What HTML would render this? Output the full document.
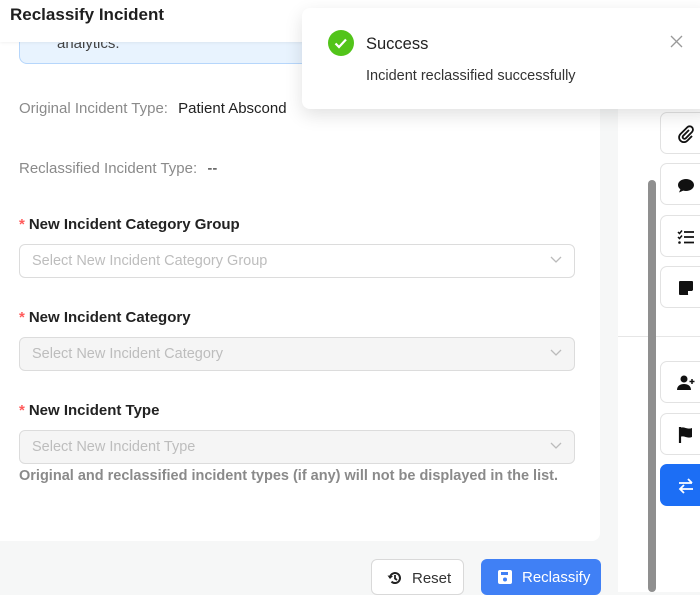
<!DOCTYPE html>
<html><head><style>
*{box-sizing:border-box;margin:0;padding:0}
body{width:700px;height:592px;overflow:hidden;background:#f6f7f7;font-family:"Liberation Sans",sans-serif;position:relative;font-size:14px}
.hdr{position:absolute;left:0;top:0;width:700px;height:42px;background:#fff;box-shadow:0 1px 3px rgba(0,0,0,.06)}
.hdr h1{position:absolute;left:10px;top:5px;font-size:17px;font-weight:bold;color:#1f1f1f}
.card{position:absolute;left:-10px;top:42px;width:610px;height:499px;background:#fff;border-radius:0 0 8px 8px}
.info{position:absolute;left:19px;top:30px;width:600px;height:34px;background:#e8f3fe;border:1px solid #b6d6fb;border-radius:0 0 8px 8px;border-top:none}
.info span{position:absolute;left:37px;top:5px;color:#444;font-size:15px}
.t{position:absolute;color:#8a8a8a;font-size:15px}
.t b{font-weight:normal;color:#222;margin-left:6px}
.lab{position:absolute;left:19px;font-size:15px;font-weight:bold;color:#222}
.lab i{color:#ff5a5a;font-style:normal;margin-right:4px}
.sel{position:absolute;left:19px;width:556px;height:34px;border:1px solid #dcdcdc;border-radius:6px;color:#bdbdbd;padding:8px 12px;font-size:14.5px}
.sel.d{background:#f5f5f5}
.sel svg{position:absolute;right:12px;top:11px}
.note{position:absolute;left:19px;top:468px;color:#8a8a8a;font-size:14.5px;font-weight:bold}
.btn{position:absolute;top:559px;height:36px;border-radius:6px;font-size:15px}
.btn span{position:absolute;top:10px}
.reset{left:371px;width:93px;border:1px solid #d9d9d9;background:#fff;color:#333}
.recl{left:481px;width:120px;background:#4080f5;color:#fff}
.side{position:absolute;left:618px;top:95px;width:82px;height:497px;background:#fff}
.sb{position:absolute;left:648px;top:180px;width:8px;height:412px;background:#8f8f8f;border-radius:4px}
.ib{position:absolute;left:660px;width:50px;height:42px;border:1px solid #e2e2e2;border-radius:7px;background:#fff}
.ib svg{position:absolute;left:16px;top:12px}
.toast{position:absolute;left:302px;top:8px;width:410px;height:101px;background:#fff;border-radius:8px;box-shadow:0 6px 18px rgba(0,0,0,.12)}
</style></head><body>
<div class="card"></div>
<div class="info"><span>analytics.</span></div>
<div class="hdr"><h1>Reclassify Incident</h1></div>
<div class="t" style="left:19px;top:100px">Original Incident Type: <b>Patient Abscond</b></div>
<div class="t" style="left:19px;top:160px">Reclassified Incident Type: <b>--</b></div>
<div class="lab" style="top:216px"><i>*</i>New Incident Category Group</div>
<div class="sel" style="top:244px">Select New Incident Category Group<svg width="12" height="8" viewBox="0 0 12 8"><path d="M1 1l5 5 5-5" fill="none" stroke="#bbb" stroke-width="1.3"/></svg></div>
<div class="lab" style="top:309px"><i>*</i>New Incident Category</div>
<div class="sel d" style="top:337px">Select New Incident Category<svg width="12" height="8" viewBox="0 0 12 8"><path d="M1 1l5 5 5-5" fill="none" stroke="#bbb" stroke-width="1.3"/></svg></div>
<div class="lab" style="top:402px"><i>*</i>New Incident Type</div>
<div class="sel d" style="top:430px">Select New Incident Type<svg width="12" height="8" viewBox="0 0 12 8"><path d="M1 1l5 5 5-5" fill="none" stroke="#bbb" stroke-width="1.3"/></svg></div>
<div class="note">Original and reclassified incident types (if any) will not be displayed in the list.</div>
<div class="btn reset"><svg style="position:absolute;left:15px;top:10px" width="16" height="16" viewBox="0 0 16 16"><path d="M3 8a5 5 0 1 1 1.5 3.6" fill="none" stroke="#222" stroke-width="2"/><path d="M0.5 5.5L3 9l3-3z" fill="#222"/><path d="M8 5v3.5l2 1.5" fill="none" stroke="#222" stroke-width="1.8"/></svg><span style="left:40px">Reset</span></div>
<div class="btn recl"><svg style="position:absolute;left:17px;top:11px" width="14" height="14" viewBox="0 0 14 14"><rect x="0" y="0" width="14" height="14" rx="2" fill="#fff"/><rect x="3" y="2" width="7" height="3" fill="#4080f5"/><circle cx="7" cy="9.5" r="2" fill="#4080f5"/></svg><span style="left:41px">Reclassify</span></div>
<div class="side"></div>
<div style="position:absolute;left:618px;top:336px;width:82px;height:1px;background:#e6e6e6"></div>
<div class="sb"></div>
<div class="ib" style="top:112px"><svg width="18" height="18" viewBox="0 0 18 18"><path d="M12 5l-6 6a1.8 1.8 0 0 0 2.5 2.5l6.5-6.5a3.3 3.3 0 0 0-4.7-4.7L3.5 9a4.8 4.8 0 0 0 6.8 6.8L15 11" fill="none" stroke="#111" stroke-width="1.8"/></svg></div>
<div class="ib" style="top:163px"><svg width="18" height="18" viewBox="0 0 18 18"><path d="M9 3c4.4 0 8 2.6 8 6s-3.6 6-8 6c-1 0-2-.1-2.8-.4L2 16.5l1.4-3.2C1.9 12.2 1 10.7 1 9c0-3.4 3.6-6 8-6z" fill="#111"/></svg></div>
<div class="ib" style="top:215px"><svg width="18" height="18" viewBox="0 0 18 18"><path d="M1 4l1.5 1.5L5 2.5M1 9l1.5 1.5L5 7.5" fill="none" stroke="#111" stroke-width="1.5"/><circle cx="2.5" cy="14.5" r="1.3" fill="#111"/><path d="M7 4h10M7 9h10M7 14.5h10" stroke="#111" stroke-width="1.8"/></svg></div>
<div class="ib" style="top:266px"><svg width="18" height="18" viewBox="0 0 18 18"><path d="M3 2h12a1 1 0 0 1 1 1v8l-5 5H3a1 1 0 0 1-1-1V3a1 1 0 0 1 1-1z" fill="#111"/><path d="M11 16v-4h5" fill="#fff"/></svg></div>
<div class="ib" style="top:361px"><svg width="18" height="18" viewBox="0 0 18 18"><circle cx="7" cy="5" r="3.5" fill="#111"/><path d="M0 16c0-4 3-6 7-6s7 2 7 6z" fill="#111"/><path d="M15 5v5M12.5 7.5h5" stroke="#111" stroke-width="1.5"/></svg></div>
<div class="ib" style="top:413px"><svg width="18" height="18" viewBox="0 0 18 18"><path d="M3 1v16" stroke="#111" stroke-width="2.2"/><path d="M3 2c4-2 7 2 12 0v9c-5 2-8-2-12 0z" fill="#111"/></svg></div>
<div class="ib" style="top:464px;background:#1c6ef5;border-color:#1c6ef5"><svg width="18" height="18" viewBox="0 0 18 18"><path d="M2 6h13M11 2l4 4M16 12H3M7 8l-4 4 4 4" fill="none" stroke="#fff" stroke-width="1.8"/></svg></div>
<div class="toast">
<svg style="position:absolute;left:26px;top:22px" width="26" height="26" viewBox="0 0 26 26"><circle cx="13" cy="13" r="13" fill="#52c41a"/><path d="M7.5 13.5l3.5 3.5 7-7.5" fill="none" stroke="#fff" stroke-width="2.2"/></svg>
<div style="position:absolute;left:64px;top:27px;font-size:16.5px;color:#222">Success</div>
<div style="position:absolute;left:64px;top:60px;font-size:14.5px;color:#333">Incident reclassified successfully</div>
<svg style="position:absolute;left:368px;top:27px" width="13" height="13" viewBox="0 0 13 13"><path d="M1 1l11 11M12 1L1 12" stroke="#999" stroke-width="1.3"/></svg>
</div>
</body></html>
